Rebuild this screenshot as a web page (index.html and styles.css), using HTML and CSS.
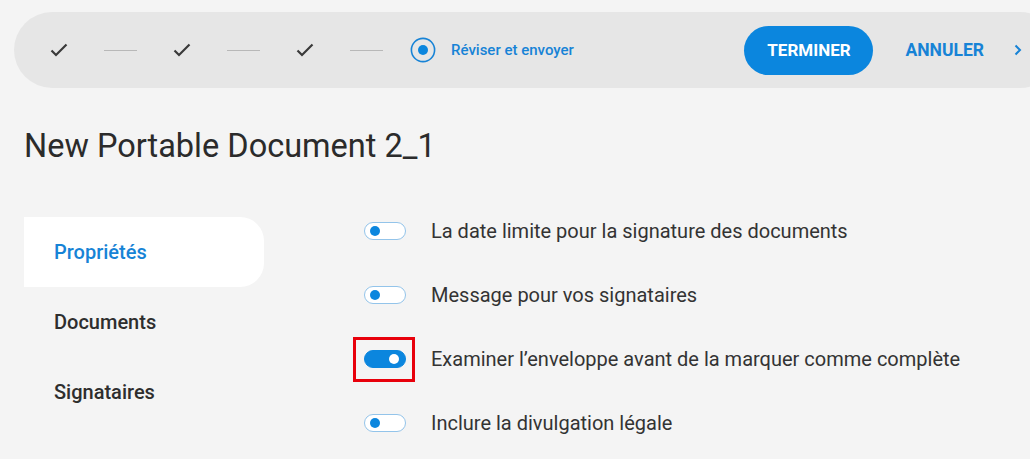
FILE: index.html
```html
<!DOCTYPE html>
<html lang="fr">
<head>
  <meta charset="UTF-8" />
  <meta name="viewport" content="width=device-width, initial-scale=1.0"/>
  <title>New Portable Document 2_1</title>
  <link rel="stylesheet" href="styles.css">
</head>
<body>
  <div class="stepper">
    <div class="steps">
      <span class="step done">
        <svg width="18" height="14" viewBox="0 0 18 14"><path d="M1.5 7.5 L6 12 L16.5 1.5" fill="none" stroke="#3a3a3a" stroke-width="2.2"/></svg>
      </span>
      <span class="step-line"></span>
      <span class="step done">
        <svg width="18" height="14" viewBox="0 0 18 14"><path d="M1.5 7.5 L6 12 L16.5 1.5" fill="none" stroke="#3a3a3a" stroke-width="2.2"/></svg>
      </span>
      <span class="step-line"></span>
      <span class="step done">
        <svg width="18" height="14" viewBox="0 0 18 14"><path d="M1.5 7.5 L6 12 L16.5 1.5" fill="none" stroke="#3a3a3a" stroke-width="2.2"/></svg>
      </span>
      <span class="step-line last"></span>
      <span class="step current">
        <svg width="26" height="26" viewBox="0 0 26 26"><circle cx="13" cy="13" r="11.6" fill="none" stroke="#1783d6" stroke-width="1.6"/><circle cx="13" cy="13" r="5" fill="#0b86de"/></svg>
      </span>
      <span class="step-label">Réviser et envoyer</span>
    </div>
    <div class="actions">
      <button class="btn-primary">TERMINER</button>
      <button class="btn-link">ANNULER</button>
      <span class="chevron">
        <svg width="8" height="12" viewBox="0 0 8 12"><path d="M1.5 1.5 L6 6 L1.5 10.5" fill="none" stroke="#1783d6" stroke-width="2"/></svg>
      </span>
    </div>
  </div>

  <h1 class="doc-title">New Portable Document 2_1</h1>

  <div class="content">
    <nav class="side-nav">
      <a href="#" class="nav-item active">Propriétés</a>
      <a href="#" class="nav-item">Documents</a>
      <a href="#" class="nav-item">Signataires</a>
    </nav>

    <div class="options">
      <div class="option">
        <span class="toggle"></span>
        <span class="option-label">La date limite pour la signature des documents</span>
      </div>
      <div class="option">
        <span class="toggle"></span>
        <span class="option-label">Message pour vos signataires</span>
      </div>
      <div class="option">
        <span class="toggle on"><span class="highlight"></span></span>
        <span class="option-label">Examiner l’enveloppe avant de la marquer comme complète</span>
      </div>
      <div class="option">
        <span class="toggle"></span>
        <span class="option-label">Inclure la divulgation légale</span>
      </div>
    </div>
  </div>
</body>
</html>
```

FILE: styles.css
```css
body {
  margin: 0;
  font-family: Roboto, 'Liberation Sans', sans-serif;
  background: #f4f4f4;
  color: #333;
  overflow: hidden;
}
.stepper {
  display: flex;
  align-items: center;
  height: 76px;
  margin: 12px -28px 0 14px;
  padding: 0 36px 0 36px;
  background: #e6e6e6;
  border-radius: 38px;
}
.steps {
  display: flex;
  align-items: center;
}
.step {
  display: flex;
  align-items: center;
}
.step-line {
  width: 33px;
  height: 1px;
  background: #b8b8b8;
  margin: 0 36px;
}
.step-line.last {
  margin-right: 27px;
}
.step-label {
  margin-left: 15px;
  font-size: 15px;
  font-weight: 500;
  color: #1783d6;
}
.actions {
  margin-left: auto;
  display: flex;
  align-items: center;
}
.btn-primary {
  width: 129px;
  height: 49px;
  border: none;
  border-radius: 25px;
  background: #0b86de;
  color: #fff;
  font-family: inherit;
  font-size: 17px;
  font-weight: 700;
  cursor: pointer;
}
.btn-link {
  margin-left: 32px;
  padding: 0;
  border: none;
  background: none;
  color: #1783d6;
  font-family: inherit;
  font-size: 17.5px;
  font-weight: 700;
  cursor: pointer;
}
.chevron {
  display: flex;
  margin-left: 30px;
}
.doc-title {
  margin: 39px 0 0 24px;
  font-size: 32.5px;
  line-height: 38px;
  font-weight: 400;
  color: #2b2b2b;
}
.content {
  display: flex;
  align-items: flex-start;
  margin: 46px 0 0 24px;
}
.side-nav {
  width: 240px;
  margin-top: 6px;
  display: flex;
  flex-direction: column;
}
.nav-item {
  display: flex;
  align-items: center;
  height: 70px;
  padding-left: 30px;
  font-size: 20px;
  font-weight: 500;
  color: #2e2e2e;
  text-decoration: none;
}
.nav-item.active {
  background: #fff;
  color: #1783d6;
  border-radius: 0 24px 24px 0;
}
.options {
  margin-left: 100px;
  display: flex;
  flex-direction: column;
  gap: 24px;
}
.option {
  display: flex;
  align-items: center;
  height: 40px;
}
.toggle {
  position: relative;
  box-sizing: border-box;
  width: 42px;
  height: 18px;
  border: 1px solid #93c4ea;
  border-radius: 9px;
  background: #fff;
}
.toggle::after {
  content: "";
  position: absolute;
  left: 5px;
  top: 3px;
  width: 10px;
  height: 10px;
  border-radius: 50%;
  background: #0b86de;
}
.toggle.on {
  background: #0b86de;
  border-color: #0b86de;
}
.toggle.on::after {
  left: auto;
  right: 6px;
  background: #fff;
}
.highlight {
  position: absolute;
  left: -12px;
  top: -14px;
  width: 62px;
  height: 45px;
  box-sizing: border-box;
  border: 3px solid #e8000b;
}
.option-label {
  margin-left: 25px;
  font-size: 20px;
  color: #333;
}
```
